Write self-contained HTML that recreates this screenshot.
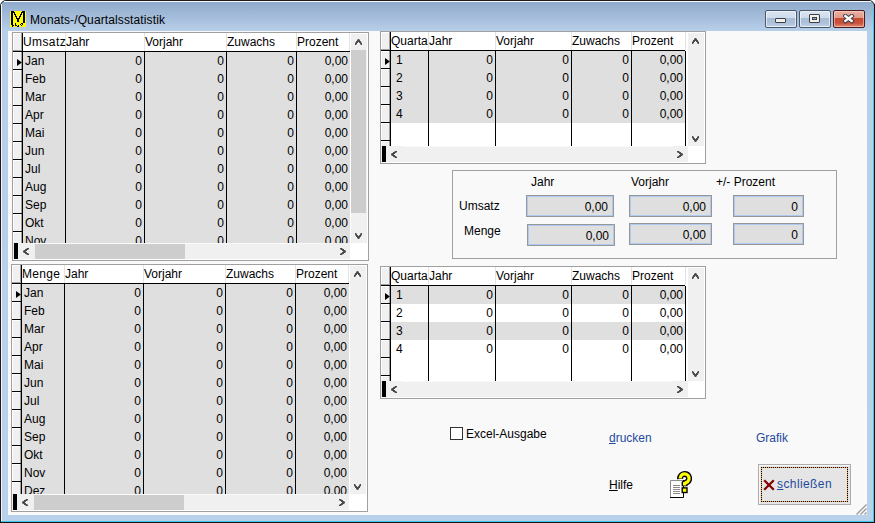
<!DOCTYPE html>
<html><head><meta charset="utf-8"><style>
html,body{margin:0;padding:0;}
body{width:875px;height:523px;position:relative;overflow:hidden;background:#fff;font-family:"Liberation Sans",sans-serif;font-size:12px;}
body>div{position:absolute;}
.t{position:absolute;font-family:"Liberation Sans",sans-serif;font-size:12px;line-height:14px;white-space:nowrap;}
u{text-decoration:underline;text-underline-offset:1px;}
</style></head><body>
<div style="left:0;top:0;width:875px;height:523px;background:#ffffff"></div>
<div style="left:0;top:0;width:875px;height:523px;box-sizing:border-box;border:1px solid #1c1c1c;border-radius:6px 6px 0 0;background:linear-gradient(#8eaacb 0px,#a1bad8 14px,#b8cfe9 30px,#b9d1ea 100%)"></div>
<div style="left:873px;top:8px;width:1px;height:514px;background:#3cc8e8;"></div>
<div style="left:1px;top:521px;width:873px;height:1px;background:#3cc8e8;"></div>
<div style="left:874px;top:4px;width:1px;height:519px;background:#141414;"></div>
<div style="left:0px;top:522px;width:875px;height:1px;background:#141414;"></div>
<div style="left:4px;top:1px;width:867px;height:1px;background:#f6f9fd;"></div>
<div style="left:1px;top:4px;width:1px;height:517px;background:#f2f6fb;"></div>
<div style="left:8px;top:31px;width:859px;height:484px;background:#f9f9f9;"></div>
<svg style="position:absolute;left:10px;top:11px;shape-rendering:crispEdges" width="16" height="16" viewBox="0 0 16 16"><rect width="16" height="16" fill="#ffff00"/><path d="M1 0h1v1h-1zM2 0h1v1h-1zM3 0h1v1h-1zM12 0h1v1h-1zM13 0h1v1h-1zM14 0h1v1h-1zM1 1h1v1h-1zM2 1h1v1h-1zM3 1h1v1h-1zM4 1h1v1h-1zM11 1h1v1h-1zM12 1h1v1h-1zM13 1h1v1h-1zM14 1h1v1h-1zM1 2h1v1h-1zM2 2h1v1h-1zM4 2h1v1h-1zM11 2h1v1h-1zM13 2h1v1h-1zM14 2h1v1h-1zM1 3h1v1h-1zM2 3h1v1h-1zM4 3h1v1h-1zM5 3h1v1h-1zM10 3h1v1h-1zM11 3h1v1h-1zM13 3h1v1h-1zM14 3h1v1h-1zM1 4h1v1h-1zM2 4h1v1h-1zM5 4h1v1h-1zM10 4h1v1h-1zM13 4h1v1h-1zM14 4h1v1h-1zM1 5h1v1h-1zM2 5h1v1h-1zM5 5h1v1h-1zM6 5h1v1h-1zM9 5h1v1h-1zM10 5h1v1h-1zM13 5h1v1h-1zM14 5h1v1h-1zM1 6h1v1h-1zM2 6h1v1h-1zM6 6h1v1h-1zM9 6h1v1h-1zM13 6h1v1h-1zM14 6h1v1h-1zM1 7h1v1h-1zM2 7h1v1h-1zM6 7h1v1h-1zM7 7h1v1h-1zM8 7h1v1h-1zM9 7h1v1h-1zM13 7h1v1h-1zM14 7h1v1h-1zM1 8h1v1h-1zM2 8h1v1h-1zM7 8h1v1h-1zM8 8h1v1h-1zM13 8h1v1h-1zM14 8h1v1h-1zM1 9h1v1h-1zM2 9h1v1h-1zM7 9h1v1h-1zM8 9h1v1h-1zM13 9h1v1h-1zM14 9h1v1h-1zM1 10h1v1h-1zM2 10h1v1h-1zM7 10h1v1h-1zM8 10h1v1h-1zM13 10h1v1h-1zM14 10h1v1h-1zM1 11h1v1h-1zM2 11h1v1h-1zM13 11h1v1h-1zM14 11h1v1h-1zM1 12h1v1h-1zM2 12h1v1h-1zM5 12h1v1h-1zM11 12h1v1h-1zM12 12h1v1h-1zM1 13h1v1h-1zM2 13h1v1h-1zM5 13h1v1h-1zM10 13h1v1h-1zM12 13h1v1h-1zM2 14h1v1h-1zM3 14h1v1h-1zM5 14h1v1h-1zM6 14h1v1h-1zM8 14h1v1h-1zM11 14h1v1h-1zM2 15h1v1h-1zM7 15h1v1h-1zM8 15h1v1h-1z" fill="#000"/></svg>
<span class="t" style="left:30px;top:13px;color:#000;letter-spacing:0.12px">Monats-/Quartalsstatistik</span>
<div style="left:765px;top:10px;width:32px;height:18px;box-sizing:border-box;border:1px solid #4a5768;border-radius:2px;box-shadow:inset 0 0 0 1px rgba(240,246,252,0.75);background:linear-gradient(#dbe5f1 0px,#cddbeb 7px,#a8bcd5 7.5px,#adc1d9 12px,#c3d4e8 16px)"></div>
<div style="left:775px;top:18px;width:11px;height:5px;box-sizing:border-box;border:1px solid #3a3f48;border-radius:1px;background:#f2f0ec"></div>
<div style="left:799px;top:10px;width:32px;height:18px;box-sizing:border-box;border:1px solid #4a5768;border-radius:2px;box-shadow:inset 0 0 0 1px rgba(240,246,252,0.75);background:linear-gradient(#dbe5f1 0px,#cddbeb 7px,#a8bcd5 7.5px,#adc1d9 12px,#c3d4e8 16px)"></div>
<div style="left:809px;top:14px;width:11px;height:9px;box-sizing:border-box;border:1px solid #3a3f48;border-radius:1px;background:#f2f0ec"></div>
<div style="left:812px;top:17px;width:5px;height:3px;box-sizing:border-box;border:1px solid #3a3f48;background:#8fb0d0"></div>
<div style="left:833px;top:10px;width:32px;height:18px;box-sizing:border-box;border:1px solid #4e1a1a;border-radius:2px;box-shadow:inset 0 0 0 1px rgba(255,220,210,0.55);background:linear-gradient(#eab0a2 0px,#e39a88 7px,#c84a30 7.5px,#c9503a 12px,#e08a70 16px)"></div>
<svg style="position:absolute;left:843px;top:14px;" width="12" height="10" viewBox="0 0 12 10"><path d="M2.3 2L8.7 7M8.7 2L2.3 7" stroke="#3c3f4a" stroke-width="4.2" stroke-linecap="square"/><path d="M2.3 2L8.7 7M8.7 2L2.3 7" stroke="#ffffff" stroke-width="2.3" stroke-linecap="square"/></svg>
<div style="left:12px;top:32px;width:357px;height:229px;background:#a0a0a0;"></div>
<div style="left:13px;top:33px;width:355px;height:227px;background:#ffffff;"></div>
<div style="left:13px;top:33px;width:9px;height:18px;background:#f0f0f0;"></div>
<div style="left:13px;top:33px;width:1px;height:18px;background:#ffffff;"></div>
<div style="left:13px;top:33px;width:9px;height:1px;background:#ffffff;"></div>
<div style="left:21px;top:33px;width:1px;height:18px;background:#a0a0a0;"></div>
<div style="left:13px;top:50px;width:9px;height:1px;background:#a0a0a0;"></div>
<div style="left:65px;top:33px;width:1px;height:18px;background:#e3e3e3;"></div>
<div style="left:144px;top:33px;width:1px;height:18px;background:#e3e3e3;"></div>
<div style="left:226px;top:33px;width:1px;height:18px;background:#e3e3e3;"></div>
<div style="left:296px;top:33px;width:1px;height:18px;background:#e3e3e3;"></div>
<div style="left:23px;top:52px;width:327px;height:18px;background:#dfdfdf;"></div>
<div style="left:13px;top:52px;width:9px;height:17px;background:#f0f0f0;"></div>
<div style="left:13px;top:52px;width:1px;height:17px;background:#ffffff;"></div>
<div style="left:13px;top:52px;width:9px;height:1px;background:#ffffff;"></div>
<div style="left:21px;top:52px;width:1px;height:17px;background:#a0a0a0;"></div>
<div style="left:13px;top:69px;width:9px;height:1px;background:#000000;"></div>
<div style="left:23px;top:70px;width:327px;height:18px;background:#dfdfdf;"></div>
<div style="left:13px;top:70px;width:9px;height:17px;background:#f0f0f0;"></div>
<div style="left:13px;top:70px;width:1px;height:17px;background:#ffffff;"></div>
<div style="left:13px;top:70px;width:9px;height:1px;background:#ffffff;"></div>
<div style="left:21px;top:70px;width:1px;height:17px;background:#a0a0a0;"></div>
<div style="left:13px;top:87px;width:9px;height:1px;background:#000000;"></div>
<div style="left:23px;top:88px;width:327px;height:18px;background:#dfdfdf;"></div>
<div style="left:13px;top:88px;width:9px;height:17px;background:#f0f0f0;"></div>
<div style="left:13px;top:88px;width:1px;height:17px;background:#ffffff;"></div>
<div style="left:13px;top:88px;width:9px;height:1px;background:#ffffff;"></div>
<div style="left:21px;top:88px;width:1px;height:17px;background:#a0a0a0;"></div>
<div style="left:13px;top:105px;width:9px;height:1px;background:#000000;"></div>
<div style="left:23px;top:106px;width:327px;height:18px;background:#dfdfdf;"></div>
<div style="left:13px;top:106px;width:9px;height:17px;background:#f0f0f0;"></div>
<div style="left:13px;top:106px;width:1px;height:17px;background:#ffffff;"></div>
<div style="left:13px;top:106px;width:9px;height:1px;background:#ffffff;"></div>
<div style="left:21px;top:106px;width:1px;height:17px;background:#a0a0a0;"></div>
<div style="left:13px;top:123px;width:9px;height:1px;background:#000000;"></div>
<div style="left:23px;top:124px;width:327px;height:18px;background:#dfdfdf;"></div>
<div style="left:13px;top:124px;width:9px;height:17px;background:#f0f0f0;"></div>
<div style="left:13px;top:124px;width:1px;height:17px;background:#ffffff;"></div>
<div style="left:13px;top:124px;width:9px;height:1px;background:#ffffff;"></div>
<div style="left:21px;top:124px;width:1px;height:17px;background:#a0a0a0;"></div>
<div style="left:13px;top:141px;width:9px;height:1px;background:#000000;"></div>
<div style="left:23px;top:142px;width:327px;height:18px;background:#dfdfdf;"></div>
<div style="left:13px;top:142px;width:9px;height:17px;background:#f0f0f0;"></div>
<div style="left:13px;top:142px;width:1px;height:17px;background:#ffffff;"></div>
<div style="left:13px;top:142px;width:9px;height:1px;background:#ffffff;"></div>
<div style="left:21px;top:142px;width:1px;height:17px;background:#a0a0a0;"></div>
<div style="left:13px;top:159px;width:9px;height:1px;background:#000000;"></div>
<div style="left:23px;top:160px;width:327px;height:18px;background:#dfdfdf;"></div>
<div style="left:13px;top:160px;width:9px;height:17px;background:#f0f0f0;"></div>
<div style="left:13px;top:160px;width:1px;height:17px;background:#ffffff;"></div>
<div style="left:13px;top:160px;width:9px;height:1px;background:#ffffff;"></div>
<div style="left:21px;top:160px;width:1px;height:17px;background:#a0a0a0;"></div>
<div style="left:13px;top:177px;width:9px;height:1px;background:#000000;"></div>
<div style="left:23px;top:178px;width:327px;height:18px;background:#dfdfdf;"></div>
<div style="left:13px;top:178px;width:9px;height:17px;background:#f0f0f0;"></div>
<div style="left:13px;top:178px;width:1px;height:17px;background:#ffffff;"></div>
<div style="left:13px;top:178px;width:9px;height:1px;background:#ffffff;"></div>
<div style="left:21px;top:178px;width:1px;height:17px;background:#a0a0a0;"></div>
<div style="left:13px;top:195px;width:9px;height:1px;background:#000000;"></div>
<div style="left:23px;top:196px;width:327px;height:18px;background:#dfdfdf;"></div>
<div style="left:13px;top:196px;width:9px;height:17px;background:#f0f0f0;"></div>
<div style="left:13px;top:196px;width:1px;height:17px;background:#ffffff;"></div>
<div style="left:13px;top:196px;width:9px;height:1px;background:#ffffff;"></div>
<div style="left:21px;top:196px;width:1px;height:17px;background:#a0a0a0;"></div>
<div style="left:13px;top:213px;width:9px;height:1px;background:#000000;"></div>
<div style="left:23px;top:214px;width:327px;height:18px;background:#dfdfdf;"></div>
<div style="left:13px;top:214px;width:9px;height:17px;background:#f0f0f0;"></div>
<div style="left:13px;top:214px;width:1px;height:17px;background:#ffffff;"></div>
<div style="left:13px;top:214px;width:9px;height:1px;background:#ffffff;"></div>
<div style="left:21px;top:214px;width:1px;height:17px;background:#a0a0a0;"></div>
<div style="left:13px;top:231px;width:9px;height:1px;background:#000000;"></div>
<div style="left:23px;top:232px;width:327px;height:11px;background:#dfdfdf;"></div>
<div style="left:13px;top:232px;width:9px;height:11px;background:#f0f0f0;"></div>
<div style="left:13px;top:232px;width:1px;height:11px;background:#ffffff;"></div>
<div style="left:13px;top:232px;width:9px;height:1px;background:#ffffff;"></div>
<div style="left:21px;top:232px;width:1px;height:11px;background:#a0a0a0;"></div>
<div style="left:13px;top:51px;width:337px;height:1px;background:#000;"></div>
<div style="left:22px;top:33px;width:1px;height:210px;background:#000;"></div>
<div style="left:65px;top:52px;width:1px;height:191px;background:#000;"></div>
<div style="left:144px;top:52px;width:1px;height:191px;background:#000;"></div>
<div style="left:226px;top:52px;width:1px;height:191px;background:#000;"></div>
<div style="left:296px;top:52px;width:1px;height:191px;background:#000;"></div>
<svg style="position:absolute;left:17px;top:59px;" width="6" height="8" viewBox="0 0 6 8"><polygon points="0,0 4.9,3.5 0,7" fill="#000"/></svg>
<span class="t" style="left:23px;top:35px;color:#000;"><span style="letter-spacing:0.4px">Umsatz</span></span>
<span class="t" style="left:66px;top:35px;color:#000;">Jahr</span>
<span class="t" style="left:145px;top:35px;color:#000;">Vorjahr</span>
<span class="t" style="left:227px;top:35px;color:#000;">Zuwachs</span>
<span class="t" style="left:297px;top:35px;color:#000;">Prozent</span>
<span class="t" style="left:25px;top:54px;color:#000;">Jan</span>
<span class="t" style="right:733px;top:54px;color:#000;text-align:right;">0</span>
<span class="t" style="right:651px;top:54px;color:#000;text-align:right;">0</span>
<span class="t" style="right:581px;top:54px;color:#000;text-align:right;">0</span>
<span class="t" style="right:527px;top:54px;color:#000;text-align:right;">0,00</span>
<span class="t" style="left:25px;top:72px;color:#000;">Feb</span>
<span class="t" style="right:733px;top:72px;color:#000;text-align:right;">0</span>
<span class="t" style="right:651px;top:72px;color:#000;text-align:right;">0</span>
<span class="t" style="right:581px;top:72px;color:#000;text-align:right;">0</span>
<span class="t" style="right:527px;top:72px;color:#000;text-align:right;">0,00</span>
<span class="t" style="left:25px;top:90px;color:#000;">Mar</span>
<span class="t" style="right:733px;top:90px;color:#000;text-align:right;">0</span>
<span class="t" style="right:651px;top:90px;color:#000;text-align:right;">0</span>
<span class="t" style="right:581px;top:90px;color:#000;text-align:right;">0</span>
<span class="t" style="right:527px;top:90px;color:#000;text-align:right;">0,00</span>
<span class="t" style="left:25px;top:108px;color:#000;">Apr</span>
<span class="t" style="right:733px;top:108px;color:#000;text-align:right;">0</span>
<span class="t" style="right:651px;top:108px;color:#000;text-align:right;">0</span>
<span class="t" style="right:581px;top:108px;color:#000;text-align:right;">0</span>
<span class="t" style="right:527px;top:108px;color:#000;text-align:right;">0,00</span>
<span class="t" style="left:25px;top:126px;color:#000;">Mai</span>
<span class="t" style="right:733px;top:126px;color:#000;text-align:right;">0</span>
<span class="t" style="right:651px;top:126px;color:#000;text-align:right;">0</span>
<span class="t" style="right:581px;top:126px;color:#000;text-align:right;">0</span>
<span class="t" style="right:527px;top:126px;color:#000;text-align:right;">0,00</span>
<span class="t" style="left:25px;top:144px;color:#000;">Jun</span>
<span class="t" style="right:733px;top:144px;color:#000;text-align:right;">0</span>
<span class="t" style="right:651px;top:144px;color:#000;text-align:right;">0</span>
<span class="t" style="right:581px;top:144px;color:#000;text-align:right;">0</span>
<span class="t" style="right:527px;top:144px;color:#000;text-align:right;">0,00</span>
<span class="t" style="left:25px;top:162px;color:#000;">Jul</span>
<span class="t" style="right:733px;top:162px;color:#000;text-align:right;">0</span>
<span class="t" style="right:651px;top:162px;color:#000;text-align:right;">0</span>
<span class="t" style="right:581px;top:162px;color:#000;text-align:right;">0</span>
<span class="t" style="right:527px;top:162px;color:#000;text-align:right;">0,00</span>
<span class="t" style="left:25px;top:180px;color:#000;">Aug</span>
<span class="t" style="right:733px;top:180px;color:#000;text-align:right;">0</span>
<span class="t" style="right:651px;top:180px;color:#000;text-align:right;">0</span>
<span class="t" style="right:581px;top:180px;color:#000;text-align:right;">0</span>
<span class="t" style="right:527px;top:180px;color:#000;text-align:right;">0,00</span>
<span class="t" style="left:25px;top:198px;color:#000;">Sep</span>
<span class="t" style="right:733px;top:198px;color:#000;text-align:right;">0</span>
<span class="t" style="right:651px;top:198px;color:#000;text-align:right;">0</span>
<span class="t" style="right:581px;top:198px;color:#000;text-align:right;">0</span>
<span class="t" style="right:527px;top:198px;color:#000;text-align:right;">0,00</span>
<span class="t" style="left:25px;top:216px;color:#000;">Okt</span>
<span class="t" style="right:733px;top:216px;color:#000;text-align:right;">0</span>
<span class="t" style="right:651px;top:216px;color:#000;text-align:right;">0</span>
<span class="t" style="right:581px;top:216px;color:#000;text-align:right;">0</span>
<span class="t" style="right:527px;top:216px;color:#000;text-align:right;">0,00</span>
<span class="t" style="left:25px;top:234px;color:#000;">Nov</span>
<span class="t" style="right:733px;top:234px;color:#000;text-align:right;">0</span>
<span class="t" style="right:651px;top:234px;color:#000;text-align:right;">0</span>
<span class="t" style="right:581px;top:234px;color:#000;text-align:right;">0</span>
<span class="t" style="right:527px;top:234px;color:#000;text-align:right;">0,00</span>
<div style="left:351px;top:34px;width:16px;height:209px;background:#f0f0f0;"></div>
<div style="left:351px;top:50px;width:15px;height:163px;background:#cdcdcd;"></div>
<svg style="position:absolute;left:355px;top:39px;shape-rendering:crispEdges" width="7" height="6" viewBox="0 0 7 6"><path d="M2 0h1v1h-1zM4 0h1v1h-1zM0 3h1v1h-1zM6 3h1v1h-1zM1 5h1v1h-1zM5 5h1v1h-1z" fill="#a8a8a8"/><path d="M3 0h1v1h-1zM2 1h1v1h-1zM3 1h1v1h-1zM4 1h1v1h-1zM1 2h1v1h-1zM2 2h1v1h-1zM3 2h1v1h-1zM4 2h1v1h-1zM5 2h1v1h-1zM1 3h1v1h-1zM2 3h1v1h-1zM4 3h1v1h-1zM5 3h1v1h-1zM0 4h1v1h-1zM1 4h1v1h-1zM5 4h1v1h-1zM6 4h1v1h-1zM0 5h1v1h-1zM6 5h1v1h-1z" fill="#4c4c4c"/></svg>
<svg style="position:absolute;left:355px;top:233px;shape-rendering:crispEdges" width="7" height="6" viewBox="0 0 7 6"><path d="M2 5h1v1h-1zM4 5h1v1h-1zM0 2h1v1h-1zM6 2h1v1h-1zM1 0h1v1h-1zM5 0h1v1h-1z" fill="#a8a8a8"/><path d="M3 5h1v1h-1zM2 4h1v1h-1zM3 4h1v1h-1zM4 4h1v1h-1zM1 3h1v1h-1zM2 3h1v1h-1zM3 3h1v1h-1zM4 3h1v1h-1zM5 3h1v1h-1zM1 2h1v1h-1zM2 2h1v1h-1zM4 2h1v1h-1zM5 2h1v1h-1zM0 1h1v1h-1zM1 1h1v1h-1zM5 1h1v1h-1zM6 1h1v1h-1zM0 0h1v1h-1zM6 0h1v1h-1z" fill="#4c4c4c"/></svg>
<div style="left:349px;top:33px;width:1px;height:18px;background:#e3e3e3;"></div>
<div style="left:13px;top:243px;width:337px;height:17px;background:#ffffff;"></div>
<div style="left:13px;top:243px;width:337px;height:16px;background:#f0f0f0;"></div>
<div style="left:34px;top:243px;width:299px;height:1px;background:#fafafa;"></div>
<div style="left:14px;top:243px;width:4px;height:16px;background:#000;"></div>
<div style="left:35px;top:244px;width:150px;height:15px;background:#cdcdcd;"></div>
<svg style="position:absolute;left:23px;top:248px;shape-rendering:crispEdges" width="6" height="7" viewBox="0 0 6 7"><path d="M0 2h1v1h-1zM0 4h1v1h-1zM3 0h1v1h-1zM3 6h1v1h-1zM5 1h1v1h-1zM5 5h1v1h-1z" fill="#a8a8a8"/><path d="M0 3h1v1h-1zM1 2h1v1h-1zM1 3h1v1h-1zM1 4h1v1h-1zM2 1h1v1h-1zM2 2h1v1h-1zM2 3h1v1h-1zM2 4h1v1h-1zM2 5h1v1h-1zM3 1h1v1h-1zM3 2h1v1h-1zM3 4h1v1h-1zM3 5h1v1h-1zM4 0h1v1h-1zM4 1h1v1h-1zM4 5h1v1h-1zM4 6h1v1h-1zM5 0h1v1h-1zM5 6h1v1h-1z" fill="#4c4c4c"/></svg>
<svg style="position:absolute;left:340px;top:248px;shape-rendering:crispEdges" width="6" height="7" viewBox="0 0 6 7"><path d="M5 2h1v1h-1zM5 4h1v1h-1zM2 0h1v1h-1zM2 6h1v1h-1zM0 1h1v1h-1zM0 5h1v1h-1z" fill="#a8a8a8"/><path d="M5 3h1v1h-1zM4 2h1v1h-1zM4 3h1v1h-1zM4 4h1v1h-1zM3 1h1v1h-1zM3 2h1v1h-1zM3 3h1v1h-1zM3 4h1v1h-1zM3 5h1v1h-1zM2 1h1v1h-1zM2 2h1v1h-1zM2 4h1v1h-1zM2 5h1v1h-1zM1 0h1v1h-1zM1 1h1v1h-1zM1 5h1v1h-1zM1 6h1v1h-1zM0 0h1v1h-1zM0 6h1v1h-1z" fill="#4c4c4c"/></svg>
<div style="left:351px;top:243px;width:17px;height:17px;background:#ffffff;"></div>
<div style="left:11px;top:264px;width:357px;height:248px;background:#a0a0a0;"></div>
<div style="left:12px;top:265px;width:355px;height:246px;background:#ffffff;"></div>
<div style="left:12px;top:265px;width:9px;height:18px;background:#f0f0f0;"></div>
<div style="left:12px;top:265px;width:1px;height:18px;background:#ffffff;"></div>
<div style="left:12px;top:265px;width:9px;height:1px;background:#ffffff;"></div>
<div style="left:20px;top:265px;width:1px;height:18px;background:#a0a0a0;"></div>
<div style="left:12px;top:282px;width:9px;height:1px;background:#a0a0a0;"></div>
<div style="left:64px;top:265px;width:1px;height:18px;background:#e3e3e3;"></div>
<div style="left:143px;top:265px;width:1px;height:18px;background:#e3e3e3;"></div>
<div style="left:225px;top:265px;width:1px;height:18px;background:#e3e3e3;"></div>
<div style="left:295px;top:265px;width:1px;height:18px;background:#e3e3e3;"></div>
<div style="left:22px;top:284px;width:327px;height:18px;background:#dfdfdf;"></div>
<div style="left:12px;top:284px;width:9px;height:17px;background:#f0f0f0;"></div>
<div style="left:12px;top:284px;width:1px;height:17px;background:#ffffff;"></div>
<div style="left:12px;top:284px;width:9px;height:1px;background:#ffffff;"></div>
<div style="left:20px;top:284px;width:1px;height:17px;background:#a0a0a0;"></div>
<div style="left:12px;top:301px;width:9px;height:1px;background:#000000;"></div>
<div style="left:22px;top:302px;width:327px;height:18px;background:#dfdfdf;"></div>
<div style="left:12px;top:302px;width:9px;height:17px;background:#f0f0f0;"></div>
<div style="left:12px;top:302px;width:1px;height:17px;background:#ffffff;"></div>
<div style="left:12px;top:302px;width:9px;height:1px;background:#ffffff;"></div>
<div style="left:20px;top:302px;width:1px;height:17px;background:#a0a0a0;"></div>
<div style="left:12px;top:319px;width:9px;height:1px;background:#000000;"></div>
<div style="left:22px;top:320px;width:327px;height:18px;background:#dfdfdf;"></div>
<div style="left:12px;top:320px;width:9px;height:17px;background:#f0f0f0;"></div>
<div style="left:12px;top:320px;width:1px;height:17px;background:#ffffff;"></div>
<div style="left:12px;top:320px;width:9px;height:1px;background:#ffffff;"></div>
<div style="left:20px;top:320px;width:1px;height:17px;background:#a0a0a0;"></div>
<div style="left:12px;top:337px;width:9px;height:1px;background:#000000;"></div>
<div style="left:22px;top:338px;width:327px;height:18px;background:#dfdfdf;"></div>
<div style="left:12px;top:338px;width:9px;height:17px;background:#f0f0f0;"></div>
<div style="left:12px;top:338px;width:1px;height:17px;background:#ffffff;"></div>
<div style="left:12px;top:338px;width:9px;height:1px;background:#ffffff;"></div>
<div style="left:20px;top:338px;width:1px;height:17px;background:#a0a0a0;"></div>
<div style="left:12px;top:355px;width:9px;height:1px;background:#000000;"></div>
<div style="left:22px;top:356px;width:327px;height:18px;background:#dfdfdf;"></div>
<div style="left:12px;top:356px;width:9px;height:17px;background:#f0f0f0;"></div>
<div style="left:12px;top:356px;width:1px;height:17px;background:#ffffff;"></div>
<div style="left:12px;top:356px;width:9px;height:1px;background:#ffffff;"></div>
<div style="left:20px;top:356px;width:1px;height:17px;background:#a0a0a0;"></div>
<div style="left:12px;top:373px;width:9px;height:1px;background:#000000;"></div>
<div style="left:22px;top:374px;width:327px;height:18px;background:#dfdfdf;"></div>
<div style="left:12px;top:374px;width:9px;height:17px;background:#f0f0f0;"></div>
<div style="left:12px;top:374px;width:1px;height:17px;background:#ffffff;"></div>
<div style="left:12px;top:374px;width:9px;height:1px;background:#ffffff;"></div>
<div style="left:20px;top:374px;width:1px;height:17px;background:#a0a0a0;"></div>
<div style="left:12px;top:391px;width:9px;height:1px;background:#000000;"></div>
<div style="left:22px;top:392px;width:327px;height:18px;background:#dfdfdf;"></div>
<div style="left:12px;top:392px;width:9px;height:17px;background:#f0f0f0;"></div>
<div style="left:12px;top:392px;width:1px;height:17px;background:#ffffff;"></div>
<div style="left:12px;top:392px;width:9px;height:1px;background:#ffffff;"></div>
<div style="left:20px;top:392px;width:1px;height:17px;background:#a0a0a0;"></div>
<div style="left:12px;top:409px;width:9px;height:1px;background:#000000;"></div>
<div style="left:22px;top:410px;width:327px;height:18px;background:#dfdfdf;"></div>
<div style="left:12px;top:410px;width:9px;height:17px;background:#f0f0f0;"></div>
<div style="left:12px;top:410px;width:1px;height:17px;background:#ffffff;"></div>
<div style="left:12px;top:410px;width:9px;height:1px;background:#ffffff;"></div>
<div style="left:20px;top:410px;width:1px;height:17px;background:#a0a0a0;"></div>
<div style="left:12px;top:427px;width:9px;height:1px;background:#000000;"></div>
<div style="left:22px;top:428px;width:327px;height:18px;background:#dfdfdf;"></div>
<div style="left:12px;top:428px;width:9px;height:17px;background:#f0f0f0;"></div>
<div style="left:12px;top:428px;width:1px;height:17px;background:#ffffff;"></div>
<div style="left:12px;top:428px;width:9px;height:1px;background:#ffffff;"></div>
<div style="left:20px;top:428px;width:1px;height:17px;background:#a0a0a0;"></div>
<div style="left:12px;top:445px;width:9px;height:1px;background:#000000;"></div>
<div style="left:22px;top:446px;width:327px;height:18px;background:#dfdfdf;"></div>
<div style="left:12px;top:446px;width:9px;height:17px;background:#f0f0f0;"></div>
<div style="left:12px;top:446px;width:1px;height:17px;background:#ffffff;"></div>
<div style="left:12px;top:446px;width:9px;height:1px;background:#ffffff;"></div>
<div style="left:20px;top:446px;width:1px;height:17px;background:#a0a0a0;"></div>
<div style="left:12px;top:463px;width:9px;height:1px;background:#000000;"></div>
<div style="left:22px;top:464px;width:327px;height:18px;background:#dfdfdf;"></div>
<div style="left:12px;top:464px;width:9px;height:17px;background:#f0f0f0;"></div>
<div style="left:12px;top:464px;width:1px;height:17px;background:#ffffff;"></div>
<div style="left:12px;top:464px;width:9px;height:1px;background:#ffffff;"></div>
<div style="left:20px;top:464px;width:1px;height:17px;background:#a0a0a0;"></div>
<div style="left:12px;top:481px;width:9px;height:1px;background:#000000;"></div>
<div style="left:22px;top:482px;width:327px;height:12px;background:#dfdfdf;"></div>
<div style="left:12px;top:482px;width:9px;height:12px;background:#f0f0f0;"></div>
<div style="left:12px;top:482px;width:1px;height:12px;background:#ffffff;"></div>
<div style="left:12px;top:482px;width:9px;height:1px;background:#ffffff;"></div>
<div style="left:20px;top:482px;width:1px;height:12px;background:#a0a0a0;"></div>
<div style="left:12px;top:283px;width:337px;height:1px;background:#000;"></div>
<div style="left:21px;top:265px;width:1px;height:229px;background:#000;"></div>
<div style="left:64px;top:284px;width:1px;height:210px;background:#000;"></div>
<div style="left:143px;top:284px;width:1px;height:210px;background:#000;"></div>
<div style="left:225px;top:284px;width:1px;height:210px;background:#000;"></div>
<div style="left:295px;top:284px;width:1px;height:210px;background:#000;"></div>
<svg style="position:absolute;left:16px;top:291px;" width="6" height="8" viewBox="0 0 6 8"><polygon points="0,0 4.9,3.5 0,7" fill="#000"/></svg>
<span class="t" style="left:22px;top:267px;color:#000;"><span style="letter-spacing:0.3px">Menge</span></span>
<span class="t" style="left:65px;top:267px;color:#000;">Jahr</span>
<span class="t" style="left:144px;top:267px;color:#000;">Vorjahr</span>
<span class="t" style="left:226px;top:267px;color:#000;">Zuwachs</span>
<span class="t" style="left:296px;top:267px;color:#000;">Prozent</span>
<span class="t" style="left:24px;top:286px;color:#000;">Jan</span>
<span class="t" style="right:734px;top:286px;color:#000;text-align:right;">0</span>
<span class="t" style="right:652px;top:286px;color:#000;text-align:right;">0</span>
<span class="t" style="right:582px;top:286px;color:#000;text-align:right;">0</span>
<span class="t" style="right:528px;top:286px;color:#000;text-align:right;">0,00</span>
<span class="t" style="left:24px;top:304px;color:#000;">Feb</span>
<span class="t" style="right:734px;top:304px;color:#000;text-align:right;">0</span>
<span class="t" style="right:652px;top:304px;color:#000;text-align:right;">0</span>
<span class="t" style="right:582px;top:304px;color:#000;text-align:right;">0</span>
<span class="t" style="right:528px;top:304px;color:#000;text-align:right;">0,00</span>
<span class="t" style="left:24px;top:322px;color:#000;">Mar</span>
<span class="t" style="right:734px;top:322px;color:#000;text-align:right;">0</span>
<span class="t" style="right:652px;top:322px;color:#000;text-align:right;">0</span>
<span class="t" style="right:582px;top:322px;color:#000;text-align:right;">0</span>
<span class="t" style="right:528px;top:322px;color:#000;text-align:right;">0,00</span>
<span class="t" style="left:24px;top:340px;color:#000;">Apr</span>
<span class="t" style="right:734px;top:340px;color:#000;text-align:right;">0</span>
<span class="t" style="right:652px;top:340px;color:#000;text-align:right;">0</span>
<span class="t" style="right:582px;top:340px;color:#000;text-align:right;">0</span>
<span class="t" style="right:528px;top:340px;color:#000;text-align:right;">0,00</span>
<span class="t" style="left:24px;top:358px;color:#000;">Mai</span>
<span class="t" style="right:734px;top:358px;color:#000;text-align:right;">0</span>
<span class="t" style="right:652px;top:358px;color:#000;text-align:right;">0</span>
<span class="t" style="right:582px;top:358px;color:#000;text-align:right;">0</span>
<span class="t" style="right:528px;top:358px;color:#000;text-align:right;">0,00</span>
<span class="t" style="left:24px;top:376px;color:#000;">Jun</span>
<span class="t" style="right:734px;top:376px;color:#000;text-align:right;">0</span>
<span class="t" style="right:652px;top:376px;color:#000;text-align:right;">0</span>
<span class="t" style="right:582px;top:376px;color:#000;text-align:right;">0</span>
<span class="t" style="right:528px;top:376px;color:#000;text-align:right;">0,00</span>
<span class="t" style="left:24px;top:394px;color:#000;">Jul</span>
<span class="t" style="right:734px;top:394px;color:#000;text-align:right;">0</span>
<span class="t" style="right:652px;top:394px;color:#000;text-align:right;">0</span>
<span class="t" style="right:582px;top:394px;color:#000;text-align:right;">0</span>
<span class="t" style="right:528px;top:394px;color:#000;text-align:right;">0,00</span>
<span class="t" style="left:24px;top:412px;color:#000;">Aug</span>
<span class="t" style="right:734px;top:412px;color:#000;text-align:right;">0</span>
<span class="t" style="right:652px;top:412px;color:#000;text-align:right;">0</span>
<span class="t" style="right:582px;top:412px;color:#000;text-align:right;">0</span>
<span class="t" style="right:528px;top:412px;color:#000;text-align:right;">0,00</span>
<span class="t" style="left:24px;top:430px;color:#000;">Sep</span>
<span class="t" style="right:734px;top:430px;color:#000;text-align:right;">0</span>
<span class="t" style="right:652px;top:430px;color:#000;text-align:right;">0</span>
<span class="t" style="right:582px;top:430px;color:#000;text-align:right;">0</span>
<span class="t" style="right:528px;top:430px;color:#000;text-align:right;">0,00</span>
<span class="t" style="left:24px;top:448px;color:#000;">Okt</span>
<span class="t" style="right:734px;top:448px;color:#000;text-align:right;">0</span>
<span class="t" style="right:652px;top:448px;color:#000;text-align:right;">0</span>
<span class="t" style="right:582px;top:448px;color:#000;text-align:right;">0</span>
<span class="t" style="right:528px;top:448px;color:#000;text-align:right;">0,00</span>
<span class="t" style="left:24px;top:466px;color:#000;">Nov</span>
<span class="t" style="right:734px;top:466px;color:#000;text-align:right;">0</span>
<span class="t" style="right:652px;top:466px;color:#000;text-align:right;">0</span>
<span class="t" style="right:582px;top:466px;color:#000;text-align:right;">0</span>
<span class="t" style="right:528px;top:466px;color:#000;text-align:right;">0,00</span>
<span class="t" style="left:24px;top:484px;color:#000;">Dez</span>
<span class="t" style="right:734px;top:484px;color:#000;text-align:right;">0</span>
<span class="t" style="right:652px;top:484px;color:#000;text-align:right;">0</span>
<span class="t" style="right:582px;top:484px;color:#000;text-align:right;">0</span>
<span class="t" style="right:528px;top:484px;color:#000;text-align:right;">0,00</span>
<div style="left:350px;top:266px;width:16px;height:228px;background:#f0f0f0;"></div>
<svg style="position:absolute;left:354px;top:271px;shape-rendering:crispEdges" width="7" height="6" viewBox="0 0 7 6"><path d="M2 0h1v1h-1zM4 0h1v1h-1zM0 3h1v1h-1zM6 3h1v1h-1zM1 5h1v1h-1zM5 5h1v1h-1z" fill="#a8a8a8"/><path d="M3 0h1v1h-1zM2 1h1v1h-1zM3 1h1v1h-1zM4 1h1v1h-1zM1 2h1v1h-1zM2 2h1v1h-1zM3 2h1v1h-1zM4 2h1v1h-1zM5 2h1v1h-1zM1 3h1v1h-1zM2 3h1v1h-1zM4 3h1v1h-1zM5 3h1v1h-1zM0 4h1v1h-1zM1 4h1v1h-1zM5 4h1v1h-1zM6 4h1v1h-1zM0 5h1v1h-1zM6 5h1v1h-1z" fill="#4c4c4c"/></svg>
<svg style="position:absolute;left:354px;top:484px;shape-rendering:crispEdges" width="7" height="6" viewBox="0 0 7 6"><path d="M2 5h1v1h-1zM4 5h1v1h-1zM0 2h1v1h-1zM6 2h1v1h-1zM1 0h1v1h-1zM5 0h1v1h-1z" fill="#a8a8a8"/><path d="M3 5h1v1h-1zM2 4h1v1h-1zM3 4h1v1h-1zM4 4h1v1h-1zM1 3h1v1h-1zM2 3h1v1h-1zM3 3h1v1h-1zM4 3h1v1h-1zM5 3h1v1h-1zM1 2h1v1h-1zM2 2h1v1h-1zM4 2h1v1h-1zM5 2h1v1h-1zM0 1h1v1h-1zM1 1h1v1h-1zM5 1h1v1h-1zM6 1h1v1h-1zM0 0h1v1h-1zM6 0h1v1h-1z" fill="#4c4c4c"/></svg>
<div style="left:348px;top:265px;width:1px;height:18px;background:#e3e3e3;"></div>
<div style="left:12px;top:494px;width:337px;height:17px;background:#ffffff;"></div>
<div style="left:12px;top:494px;width:337px;height:16px;background:#f0f0f0;"></div>
<div style="left:33px;top:494px;width:299px;height:1px;background:#fafafa;"></div>
<div style="left:13px;top:494px;width:4px;height:16px;background:#000;"></div>
<div style="left:34px;top:495px;width:150px;height:15px;background:#cdcdcd;"></div>
<svg style="position:absolute;left:22px;top:499px;shape-rendering:crispEdges" width="6" height="7" viewBox="0 0 6 7"><path d="M0 2h1v1h-1zM0 4h1v1h-1zM3 0h1v1h-1zM3 6h1v1h-1zM5 1h1v1h-1zM5 5h1v1h-1z" fill="#a8a8a8"/><path d="M0 3h1v1h-1zM1 2h1v1h-1zM1 3h1v1h-1zM1 4h1v1h-1zM2 1h1v1h-1zM2 2h1v1h-1zM2 3h1v1h-1zM2 4h1v1h-1zM2 5h1v1h-1zM3 1h1v1h-1zM3 2h1v1h-1zM3 4h1v1h-1zM3 5h1v1h-1zM4 0h1v1h-1zM4 1h1v1h-1zM4 5h1v1h-1zM4 6h1v1h-1zM5 0h1v1h-1zM5 6h1v1h-1z" fill="#4c4c4c"/></svg>
<svg style="position:absolute;left:339px;top:499px;shape-rendering:crispEdges" width="6" height="7" viewBox="0 0 6 7"><path d="M5 2h1v1h-1zM5 4h1v1h-1zM2 0h1v1h-1zM2 6h1v1h-1zM0 1h1v1h-1zM0 5h1v1h-1z" fill="#a8a8a8"/><path d="M5 3h1v1h-1zM4 2h1v1h-1zM4 3h1v1h-1zM4 4h1v1h-1zM3 1h1v1h-1zM3 2h1v1h-1zM3 3h1v1h-1zM3 4h1v1h-1zM3 5h1v1h-1zM2 1h1v1h-1zM2 2h1v1h-1zM2 4h1v1h-1zM2 5h1v1h-1zM1 0h1v1h-1zM1 1h1v1h-1zM1 5h1v1h-1zM1 6h1v1h-1zM0 0h1v1h-1zM0 6h1v1h-1z" fill="#4c4c4c"/></svg>
<div style="left:350px;top:494px;width:17px;height:17px;background:#ffffff;"></div>
<div style="left:380px;top:31px;width:326px;height:133px;background:#a0a0a0;"></div>
<div style="left:381px;top:32px;width:324px;height:131px;background:#ffffff;"></div>
<div style="left:381px;top:32px;width:9px;height:18px;background:#f0f0f0;"></div>
<div style="left:381px;top:32px;width:1px;height:18px;background:#ffffff;"></div>
<div style="left:381px;top:32px;width:9px;height:1px;background:#ffffff;"></div>
<div style="left:389px;top:32px;width:1px;height:18px;background:#a0a0a0;"></div>
<div style="left:381px;top:49px;width:9px;height:1px;background:#a0a0a0;"></div>
<div style="left:428px;top:32px;width:1px;height:18px;background:#e3e3e3;"></div>
<div style="left:495px;top:32px;width:1px;height:18px;background:#e3e3e3;"></div>
<div style="left:571px;top:32px;width:1px;height:18px;background:#e3e3e3;"></div>
<div style="left:631px;top:32px;width:1px;height:18px;background:#e3e3e3;"></div>
<div style="left:391px;top:51px;width:294px;height:18px;background:#dfdfdf;"></div>
<div style="left:381px;top:51px;width:9px;height:17px;background:#f0f0f0;"></div>
<div style="left:381px;top:51px;width:1px;height:17px;background:#ffffff;"></div>
<div style="left:381px;top:51px;width:9px;height:1px;background:#ffffff;"></div>
<div style="left:389px;top:51px;width:1px;height:17px;background:#a0a0a0;"></div>
<div style="left:381px;top:68px;width:9px;height:1px;background:#000000;"></div>
<div style="left:391px;top:69px;width:294px;height:18px;background:#dfdfdf;"></div>
<div style="left:381px;top:69px;width:9px;height:17px;background:#f0f0f0;"></div>
<div style="left:381px;top:69px;width:1px;height:17px;background:#ffffff;"></div>
<div style="left:381px;top:69px;width:9px;height:1px;background:#ffffff;"></div>
<div style="left:389px;top:69px;width:1px;height:17px;background:#a0a0a0;"></div>
<div style="left:381px;top:86px;width:9px;height:1px;background:#000000;"></div>
<div style="left:391px;top:87px;width:294px;height:18px;background:#dfdfdf;"></div>
<div style="left:381px;top:87px;width:9px;height:17px;background:#f0f0f0;"></div>
<div style="left:381px;top:87px;width:1px;height:17px;background:#ffffff;"></div>
<div style="left:381px;top:87px;width:9px;height:1px;background:#ffffff;"></div>
<div style="left:389px;top:87px;width:1px;height:17px;background:#a0a0a0;"></div>
<div style="left:381px;top:104px;width:9px;height:1px;background:#000000;"></div>
<div style="left:391px;top:105px;width:294px;height:18px;background:#dfdfdf;"></div>
<div style="left:381px;top:105px;width:9px;height:17px;background:#f0f0f0;"></div>
<div style="left:381px;top:105px;width:1px;height:17px;background:#ffffff;"></div>
<div style="left:381px;top:105px;width:9px;height:1px;background:#ffffff;"></div>
<div style="left:389px;top:105px;width:1px;height:17px;background:#a0a0a0;"></div>
<div style="left:381px;top:122px;width:9px;height:1px;background:#000000;"></div>
<div style="left:391px;top:123px;width:294px;height:18px;background:#ffffff;"></div>
<div style="left:381px;top:123px;width:9px;height:17px;background:#f0f0f0;"></div>
<div style="left:381px;top:123px;width:1px;height:17px;background:#ffffff;"></div>
<div style="left:381px;top:123px;width:9px;height:1px;background:#ffffff;"></div>
<div style="left:389px;top:123px;width:1px;height:17px;background:#a0a0a0;"></div>
<div style="left:381px;top:140px;width:9px;height:1px;background:#000000;"></div>
<div style="left:391px;top:141px;width:294px;height:5px;background:#ffffff;"></div>
<div style="left:381px;top:141px;width:9px;height:5px;background:#f0f0f0;"></div>
<div style="left:381px;top:141px;width:1px;height:5px;background:#ffffff;"></div>
<div style="left:381px;top:141px;width:9px;height:1px;background:#ffffff;"></div>
<div style="left:389px;top:141px;width:1px;height:5px;background:#a0a0a0;"></div>
<div style="left:381px;top:50px;width:304px;height:1px;background:#000;"></div>
<div style="left:390px;top:32px;width:1px;height:114px;background:#000;"></div>
<div style="left:428px;top:51px;width:1px;height:95px;background:#000;"></div>
<div style="left:495px;top:51px;width:1px;height:95px;background:#000;"></div>
<div style="left:571px;top:51px;width:1px;height:95px;background:#000;"></div>
<div style="left:631px;top:51px;width:1px;height:95px;background:#000;"></div>
<div style="left:685px;top:51px;width:1px;height:95px;background:#000;"></div>
<svg style="position:absolute;left:385px;top:58px;" width="6" height="8" viewBox="0 0 6 8"><polygon points="0,0 4.9,3.5 0,7" fill="#000"/></svg>
<span class="t" style="left:391px;top:34px;color:#000;">Quarta</span>
<span class="t" style="left:429px;top:34px;color:#000;">Jahr</span>
<span class="t" style="left:496px;top:34px;color:#000;">Vorjahr</span>
<span class="t" style="left:572px;top:34px;color:#000;">Zuwachs</span>
<span class="t" style="left:632px;top:34px;color:#000;">Prozent</span>
<span class="t" style="left:396px;top:53px;color:#000;">1</span>
<span class="t" style="right:382px;top:53px;color:#000;text-align:right;">0</span>
<span class="t" style="right:306px;top:53px;color:#000;text-align:right;">0</span>
<span class="t" style="right:246px;top:53px;color:#000;text-align:right;">0</span>
<span class="t" style="right:192px;top:53px;color:#000;text-align:right;">0,00</span>
<span class="t" style="left:396px;top:71px;color:#000;">2</span>
<span class="t" style="right:382px;top:71px;color:#000;text-align:right;">0</span>
<span class="t" style="right:306px;top:71px;color:#000;text-align:right;">0</span>
<span class="t" style="right:246px;top:71px;color:#000;text-align:right;">0</span>
<span class="t" style="right:192px;top:71px;color:#000;text-align:right;">0,00</span>
<span class="t" style="left:396px;top:89px;color:#000;">3</span>
<span class="t" style="right:382px;top:89px;color:#000;text-align:right;">0</span>
<span class="t" style="right:306px;top:89px;color:#000;text-align:right;">0</span>
<span class="t" style="right:246px;top:89px;color:#000;text-align:right;">0</span>
<span class="t" style="right:192px;top:89px;color:#000;text-align:right;">0,00</span>
<span class="t" style="left:396px;top:107px;color:#000;">4</span>
<span class="t" style="right:382px;top:107px;color:#000;text-align:right;">0</span>
<span class="t" style="right:306px;top:107px;color:#000;text-align:right;">0</span>
<span class="t" style="right:246px;top:107px;color:#000;text-align:right;">0</span>
<span class="t" style="right:192px;top:107px;color:#000;text-align:right;">0,00</span>
<div style="left:688px;top:33px;width:16px;height:113px;background:#f0f0f0;"></div>
<svg style="position:absolute;left:692px;top:38px;shape-rendering:crispEdges" width="7" height="6" viewBox="0 0 7 6"><path d="M2 0h1v1h-1zM4 0h1v1h-1zM0 3h1v1h-1zM6 3h1v1h-1zM1 5h1v1h-1zM5 5h1v1h-1z" fill="#a8a8a8"/><path d="M3 0h1v1h-1zM2 1h1v1h-1zM3 1h1v1h-1zM4 1h1v1h-1zM1 2h1v1h-1zM2 2h1v1h-1zM3 2h1v1h-1zM4 2h1v1h-1zM5 2h1v1h-1zM1 3h1v1h-1zM2 3h1v1h-1zM4 3h1v1h-1zM5 3h1v1h-1zM0 4h1v1h-1zM1 4h1v1h-1zM5 4h1v1h-1zM6 4h1v1h-1zM0 5h1v1h-1zM6 5h1v1h-1z" fill="#4c4c4c"/></svg>
<svg style="position:absolute;left:692px;top:136px;shape-rendering:crispEdges" width="7" height="6" viewBox="0 0 7 6"><path d="M2 5h1v1h-1zM4 5h1v1h-1zM0 2h1v1h-1zM6 2h1v1h-1zM1 0h1v1h-1zM5 0h1v1h-1z" fill="#a8a8a8"/><path d="M3 5h1v1h-1zM2 4h1v1h-1zM3 4h1v1h-1zM4 4h1v1h-1zM1 3h1v1h-1zM2 3h1v1h-1zM3 3h1v1h-1zM4 3h1v1h-1zM5 3h1v1h-1zM1 2h1v1h-1zM2 2h1v1h-1zM4 2h1v1h-1zM5 2h1v1h-1zM0 1h1v1h-1zM1 1h1v1h-1zM5 1h1v1h-1zM6 1h1v1h-1zM0 0h1v1h-1zM6 0h1v1h-1z" fill="#4c4c4c"/></svg>
<div style="left:685px;top:32px;width:1px;height:18px;background:#e3e3e3;"></div>
<div style="left:381px;top:146px;width:307px;height:17px;background:#ffffff;"></div>
<div style="left:381px;top:146px;width:307px;height:16px;background:#f0f0f0;"></div>
<div style="left:402px;top:146px;width:269px;height:1px;background:#fafafa;"></div>
<div style="left:382px;top:146px;width:4px;height:16px;background:#000;"></div>
<svg style="position:absolute;left:391px;top:151px;shape-rendering:crispEdges" width="6" height="7" viewBox="0 0 6 7"><path d="M0 2h1v1h-1zM0 4h1v1h-1zM3 0h1v1h-1zM3 6h1v1h-1zM5 1h1v1h-1zM5 5h1v1h-1z" fill="#a8a8a8"/><path d="M0 3h1v1h-1zM1 2h1v1h-1zM1 3h1v1h-1zM1 4h1v1h-1zM2 1h1v1h-1zM2 2h1v1h-1zM2 3h1v1h-1zM2 4h1v1h-1zM2 5h1v1h-1zM3 1h1v1h-1zM3 2h1v1h-1zM3 4h1v1h-1zM3 5h1v1h-1zM4 0h1v1h-1zM4 1h1v1h-1zM4 5h1v1h-1zM4 6h1v1h-1zM5 0h1v1h-1zM5 6h1v1h-1z" fill="#4c4c4c"/></svg>
<svg style="position:absolute;left:677px;top:151px;shape-rendering:crispEdges" width="6" height="7" viewBox="0 0 6 7"><path d="M5 2h1v1h-1zM5 4h1v1h-1zM2 0h1v1h-1zM2 6h1v1h-1zM0 1h1v1h-1zM0 5h1v1h-1z" fill="#a8a8a8"/><path d="M5 3h1v1h-1zM4 2h1v1h-1zM4 3h1v1h-1zM4 4h1v1h-1zM3 1h1v1h-1zM3 2h1v1h-1zM3 3h1v1h-1zM3 4h1v1h-1zM3 5h1v1h-1zM2 1h1v1h-1zM2 2h1v1h-1zM2 4h1v1h-1zM2 5h1v1h-1zM1 0h1v1h-1zM1 1h1v1h-1zM1 5h1v1h-1zM1 6h1v1h-1zM0 0h1v1h-1zM0 6h1v1h-1z" fill="#4c4c4c"/></svg>
<div style="left:688px;top:146px;width:17px;height:17px;background:#ffffff;"></div>
<div style="left:380px;top:266px;width:326px;height:133px;background:#a0a0a0;"></div>
<div style="left:381px;top:267px;width:324px;height:131px;background:#ffffff;"></div>
<div style="left:381px;top:267px;width:9px;height:18px;background:#f0f0f0;"></div>
<div style="left:381px;top:267px;width:1px;height:18px;background:#ffffff;"></div>
<div style="left:381px;top:267px;width:9px;height:1px;background:#ffffff;"></div>
<div style="left:389px;top:267px;width:1px;height:18px;background:#a0a0a0;"></div>
<div style="left:381px;top:284px;width:9px;height:1px;background:#a0a0a0;"></div>
<div style="left:428px;top:267px;width:1px;height:18px;background:#e3e3e3;"></div>
<div style="left:495px;top:267px;width:1px;height:18px;background:#e3e3e3;"></div>
<div style="left:571px;top:267px;width:1px;height:18px;background:#e3e3e3;"></div>
<div style="left:631px;top:267px;width:1px;height:18px;background:#e3e3e3;"></div>
<div style="left:391px;top:286px;width:294px;height:18px;background:#dfdfdf;"></div>
<div style="left:381px;top:286px;width:9px;height:17px;background:#f0f0f0;"></div>
<div style="left:381px;top:286px;width:1px;height:17px;background:#ffffff;"></div>
<div style="left:381px;top:286px;width:9px;height:1px;background:#ffffff;"></div>
<div style="left:389px;top:286px;width:1px;height:17px;background:#a0a0a0;"></div>
<div style="left:381px;top:303px;width:9px;height:1px;background:#000000;"></div>
<div style="left:391px;top:304px;width:294px;height:18px;background:#ffffff;"></div>
<div style="left:381px;top:304px;width:9px;height:17px;background:#f0f0f0;"></div>
<div style="left:381px;top:304px;width:1px;height:17px;background:#ffffff;"></div>
<div style="left:381px;top:304px;width:9px;height:1px;background:#ffffff;"></div>
<div style="left:389px;top:304px;width:1px;height:17px;background:#a0a0a0;"></div>
<div style="left:381px;top:321px;width:9px;height:1px;background:#000000;"></div>
<div style="left:391px;top:322px;width:294px;height:18px;background:#dfdfdf;"></div>
<div style="left:381px;top:322px;width:9px;height:17px;background:#f0f0f0;"></div>
<div style="left:381px;top:322px;width:1px;height:17px;background:#ffffff;"></div>
<div style="left:381px;top:322px;width:9px;height:1px;background:#ffffff;"></div>
<div style="left:389px;top:322px;width:1px;height:17px;background:#a0a0a0;"></div>
<div style="left:381px;top:339px;width:9px;height:1px;background:#000000;"></div>
<div style="left:391px;top:340px;width:294px;height:18px;background:#ffffff;"></div>
<div style="left:381px;top:340px;width:9px;height:17px;background:#f0f0f0;"></div>
<div style="left:381px;top:340px;width:1px;height:17px;background:#ffffff;"></div>
<div style="left:381px;top:340px;width:9px;height:1px;background:#ffffff;"></div>
<div style="left:389px;top:340px;width:1px;height:17px;background:#a0a0a0;"></div>
<div style="left:381px;top:357px;width:9px;height:1px;background:#000000;"></div>
<div style="left:391px;top:358px;width:294px;height:18px;background:#ffffff;"></div>
<div style="left:381px;top:358px;width:9px;height:17px;background:#f0f0f0;"></div>
<div style="left:381px;top:358px;width:1px;height:17px;background:#ffffff;"></div>
<div style="left:381px;top:358px;width:9px;height:1px;background:#ffffff;"></div>
<div style="left:389px;top:358px;width:1px;height:17px;background:#a0a0a0;"></div>
<div style="left:381px;top:375px;width:9px;height:1px;background:#000000;"></div>
<div style="left:391px;top:376px;width:294px;height:5px;background:#ffffff;"></div>
<div style="left:381px;top:376px;width:9px;height:5px;background:#f0f0f0;"></div>
<div style="left:381px;top:376px;width:1px;height:5px;background:#ffffff;"></div>
<div style="left:381px;top:376px;width:9px;height:1px;background:#ffffff;"></div>
<div style="left:389px;top:376px;width:1px;height:5px;background:#a0a0a0;"></div>
<div style="left:381px;top:285px;width:304px;height:1px;background:#000;"></div>
<div style="left:390px;top:267px;width:1px;height:114px;background:#000;"></div>
<div style="left:428px;top:286px;width:1px;height:95px;background:#000;"></div>
<div style="left:495px;top:286px;width:1px;height:95px;background:#000;"></div>
<div style="left:571px;top:286px;width:1px;height:95px;background:#000;"></div>
<div style="left:631px;top:286px;width:1px;height:95px;background:#000;"></div>
<div style="left:685px;top:286px;width:1px;height:95px;background:#000;"></div>
<svg style="position:absolute;left:385px;top:293px;" width="6" height="8" viewBox="0 0 6 8"><polygon points="0,0 4.9,3.5 0,7" fill="#000"/></svg>
<span class="t" style="left:391px;top:269px;color:#000;">Quarta</span>
<span class="t" style="left:429px;top:269px;color:#000;">Jahr</span>
<span class="t" style="left:496px;top:269px;color:#000;">Vorjahr</span>
<span class="t" style="left:572px;top:269px;color:#000;">Zuwachs</span>
<span class="t" style="left:632px;top:269px;color:#000;">Prozent</span>
<span class="t" style="left:396px;top:288px;color:#000;">1</span>
<span class="t" style="right:382px;top:288px;color:#000;text-align:right;">0</span>
<span class="t" style="right:306px;top:288px;color:#000;text-align:right;">0</span>
<span class="t" style="right:246px;top:288px;color:#000;text-align:right;">0</span>
<span class="t" style="right:192px;top:288px;color:#000;text-align:right;">0,00</span>
<span class="t" style="left:396px;top:306px;color:#000;">2</span>
<span class="t" style="right:382px;top:306px;color:#000;text-align:right;">0</span>
<span class="t" style="right:306px;top:306px;color:#000;text-align:right;">0</span>
<span class="t" style="right:246px;top:306px;color:#000;text-align:right;">0</span>
<span class="t" style="right:192px;top:306px;color:#000;text-align:right;">0,00</span>
<span class="t" style="left:396px;top:324px;color:#000;">3</span>
<span class="t" style="right:382px;top:324px;color:#000;text-align:right;">0</span>
<span class="t" style="right:306px;top:324px;color:#000;text-align:right;">0</span>
<span class="t" style="right:246px;top:324px;color:#000;text-align:right;">0</span>
<span class="t" style="right:192px;top:324px;color:#000;text-align:right;">0,00</span>
<span class="t" style="left:396px;top:342px;color:#000;">4</span>
<span class="t" style="right:382px;top:342px;color:#000;text-align:right;">0</span>
<span class="t" style="right:306px;top:342px;color:#000;text-align:right;">0</span>
<span class="t" style="right:246px;top:342px;color:#000;text-align:right;">0</span>
<span class="t" style="right:192px;top:342px;color:#000;text-align:right;">0,00</span>
<div style="left:688px;top:268px;width:16px;height:113px;background:#f0f0f0;"></div>
<svg style="position:absolute;left:692px;top:273px;shape-rendering:crispEdges" width="7" height="6" viewBox="0 0 7 6"><path d="M2 0h1v1h-1zM4 0h1v1h-1zM0 3h1v1h-1zM6 3h1v1h-1zM1 5h1v1h-1zM5 5h1v1h-1z" fill="#a8a8a8"/><path d="M3 0h1v1h-1zM2 1h1v1h-1zM3 1h1v1h-1zM4 1h1v1h-1zM1 2h1v1h-1zM2 2h1v1h-1zM3 2h1v1h-1zM4 2h1v1h-1zM5 2h1v1h-1zM1 3h1v1h-1zM2 3h1v1h-1zM4 3h1v1h-1zM5 3h1v1h-1zM0 4h1v1h-1zM1 4h1v1h-1zM5 4h1v1h-1zM6 4h1v1h-1zM0 5h1v1h-1zM6 5h1v1h-1z" fill="#4c4c4c"/></svg>
<svg style="position:absolute;left:692px;top:371px;shape-rendering:crispEdges" width="7" height="6" viewBox="0 0 7 6"><path d="M2 5h1v1h-1zM4 5h1v1h-1zM0 2h1v1h-1zM6 2h1v1h-1zM1 0h1v1h-1zM5 0h1v1h-1z" fill="#a8a8a8"/><path d="M3 5h1v1h-1zM2 4h1v1h-1zM3 4h1v1h-1zM4 4h1v1h-1zM1 3h1v1h-1zM2 3h1v1h-1zM3 3h1v1h-1zM4 3h1v1h-1zM5 3h1v1h-1zM1 2h1v1h-1zM2 2h1v1h-1zM4 2h1v1h-1zM5 2h1v1h-1zM0 1h1v1h-1zM1 1h1v1h-1zM5 1h1v1h-1zM6 1h1v1h-1zM0 0h1v1h-1zM6 0h1v1h-1z" fill="#4c4c4c"/></svg>
<div style="left:685px;top:267px;width:1px;height:18px;background:#e3e3e3;"></div>
<div style="left:381px;top:381px;width:307px;height:17px;background:#ffffff;"></div>
<div style="left:381px;top:381px;width:307px;height:16px;background:#f0f0f0;"></div>
<div style="left:402px;top:381px;width:269px;height:1px;background:#fafafa;"></div>
<div style="left:382px;top:381px;width:4px;height:16px;background:#000;"></div>
<svg style="position:absolute;left:391px;top:386px;shape-rendering:crispEdges" width="6" height="7" viewBox="0 0 6 7"><path d="M0 2h1v1h-1zM0 4h1v1h-1zM3 0h1v1h-1zM3 6h1v1h-1zM5 1h1v1h-1zM5 5h1v1h-1z" fill="#a8a8a8"/><path d="M0 3h1v1h-1zM1 2h1v1h-1zM1 3h1v1h-1zM1 4h1v1h-1zM2 1h1v1h-1zM2 2h1v1h-1zM2 3h1v1h-1zM2 4h1v1h-1zM2 5h1v1h-1zM3 1h1v1h-1zM3 2h1v1h-1zM3 4h1v1h-1zM3 5h1v1h-1zM4 0h1v1h-1zM4 1h1v1h-1zM4 5h1v1h-1zM4 6h1v1h-1zM5 0h1v1h-1zM5 6h1v1h-1z" fill="#4c4c4c"/></svg>
<svg style="position:absolute;left:677px;top:386px;shape-rendering:crispEdges" width="6" height="7" viewBox="0 0 6 7"><path d="M5 2h1v1h-1zM5 4h1v1h-1zM2 0h1v1h-1zM2 6h1v1h-1zM0 1h1v1h-1zM0 5h1v1h-1z" fill="#a8a8a8"/><path d="M5 3h1v1h-1zM4 2h1v1h-1zM4 3h1v1h-1zM4 4h1v1h-1zM3 1h1v1h-1zM3 2h1v1h-1zM3 3h1v1h-1zM3 4h1v1h-1zM3 5h1v1h-1zM2 1h1v1h-1zM2 2h1v1h-1zM2 4h1v1h-1zM2 5h1v1h-1zM1 0h1v1h-1zM1 1h1v1h-1zM1 5h1v1h-1zM1 6h1v1h-1zM0 0h1v1h-1zM0 6h1v1h-1z" fill="#4c4c4c"/></svg>
<div style="left:688px;top:381px;width:17px;height:17px;background:#ffffff;"></div>
<div style="left:452px;top:170px;width:385px;height:89px;box-sizing:border-box;border:1px solid #a0a0a0"></div>
<span class="t" style="left:531px;top:175px;color:#000;">Jahr</span>
<span class="t" style="left:631px;top:175px;color:#000;">Vorjahr</span>
<span class="t" style="left:716px;top:175px;color:#000;">+/- Prozent</span>
<span class="t" style="left:459px;top:199px;color:#000;">Umsatz</span>
<span class="t" style="left:464px;top:224px;color:#000;">Menge</span>
<div style="left:526px;top:195px;width:88px;height:22px;box-sizing:border-box;border:1px solid #979797;box-shadow:inset 0 0 0 1px #aecaf0;background:#dfdfdf"></div>
<span class="t" style="right:267px;top:200px;color:#000;text-align:right;">0,00</span>
<div style="left:629px;top:195px;width:83px;height:22px;box-sizing:border-box;border:1px solid #979797;box-shadow:inset 0 0 0 1px #aecaf0;background:#dfdfdf"></div>
<span class="t" style="right:169px;top:200px;color:#000;text-align:right;">0,00</span>
<div style="left:733px;top:195px;width:71px;height:22px;box-sizing:border-box;border:1px solid #979797;box-shadow:inset 0 0 0 1px #aecaf0;background:#dfdfdf"></div>
<span class="t" style="right:77px;top:200px;color:#000;text-align:right;">0</span>
<div style="left:527px;top:224px;width:88px;height:22px;box-sizing:border-box;border:1px solid #979797;box-shadow:inset 0 0 0 1px #aecaf0;background:#dfdfdf"></div>
<span class="t" style="right:266px;top:229px;color:#000;text-align:right;">0,00</span>
<div style="left:629px;top:223px;width:83px;height:22px;box-sizing:border-box;border:1px solid #979797;box-shadow:inset 0 0 0 1px #aecaf0;background:#dfdfdf"></div>
<span class="t" style="right:169px;top:228px;color:#000;text-align:right;">0,00</span>
<div style="left:733px;top:223px;width:71px;height:22px;box-sizing:border-box;border:1px solid #979797;box-shadow:inset 0 0 0 1px #aecaf0;background:#dfdfdf"></div>
<span class="t" style="right:77px;top:228px;color:#000;text-align:right;">0</span>
<div style="left:450px;top:427px;width:13px;height:13px;box-sizing:border-box;border:1px solid #333;background:#fff"></div>
<span class="t" style="left:466px;top:427px;color:#000;">Excel-Ausgabe</span>
<span class="t" style="left:609px;top:431px;color:#1f4a9e;"><u>d</u>rucken</span>
<span class="t" style="left:756px;top:431px;color:#1f4a9e;">Grafik</span>
<span class="t" style="left:609px;top:478px;color:#000;"><u>H</u>ilfe</span>
<svg style="position:absolute;left:665px;top:468px;" width="32" height="32" viewBox="0 0 32 32">
<rect x="5" y="12" width="14" height="18" fill="#fff"/>
<path d="M5.5 29.5V12.5H18.5" stroke="#8c8c8c" fill="none"/>
<path d="M18.5 12V29.5H5" stroke="#000" fill="none"/>
<path d="M8 17.5h7M8 19.5h7M8 21.5h7M8 23.5h7M8 25.5h7" stroke="#8a8a8a"/>
<path d="M15.1 11A4.5 4.5 0 1 1 22.8 13.6L19.6 15.5V18.3" fill="none" stroke="#000" stroke-width="6" stroke-linejoin="miter"/>
<path d="M15.1 10.4A4.5 4.5 0 1 1 22.8 13.6L19.6 15.5V17.6" fill="none" stroke="#ffff00" stroke-width="3.3" stroke-linejoin="miter"/>
<rect x="17.2" y="19.9" width="4.8" height="4.6" fill="#ffff00" stroke="#000" stroke-width="1.4"/>
</svg>
<div style="left:758px;top:464px;width:93px;height:41px;box-sizing:border-box;border:1px solid #adadad;background:#e5e5e5;box-shadow:inset 1px 1px 0 #f6f6f6"></div>
<div style="left:761px;top:467px;width:87px;height:1px;background:repeating-linear-gradient(90deg,#000 0 1px,#f4a640 1px 2px);"></div>
<div style="left:761px;top:501px;width:87px;height:1px;background:repeating-linear-gradient(90deg,#000 0 1px,#f4a640 1px 2px);"></div>
<div style="left:761px;top:467px;width:1px;height:35px;background:repeating-linear-gradient(180deg,#000 0 1px,#f4a640 1px 2px);"></div>
<div style="left:847px;top:467px;width:1px;height:35px;background:repeating-linear-gradient(180deg,#000 0 1px,#f4a640 1px 2px);"></div>
<svg style="position:absolute;left:762px;top:478px;" width="14" height="14" viewBox="0 0 14 14"><path d="M2.2 2.2L11.8 11.8M11.8 2.2L2.2 11.8" stroke="#800000" stroke-width="2.3"/></svg>
<span class="t" style="left:777px;top:477px;color:#1f4a9e;letter-spacing:0.4px"><u>s</u>chließen</span>
<svg style="position:absolute;left:855px;top:503px;" width="12" height="12" viewBox="0 0 12 12"><path d="M11.5 1.5L1.5 11.5M11.5 5.5L5.5 11.5M11.5 9.5L9.5 11.5" stroke="#9c9c9c" stroke-width="1.4"/></svg>
</body></html>
